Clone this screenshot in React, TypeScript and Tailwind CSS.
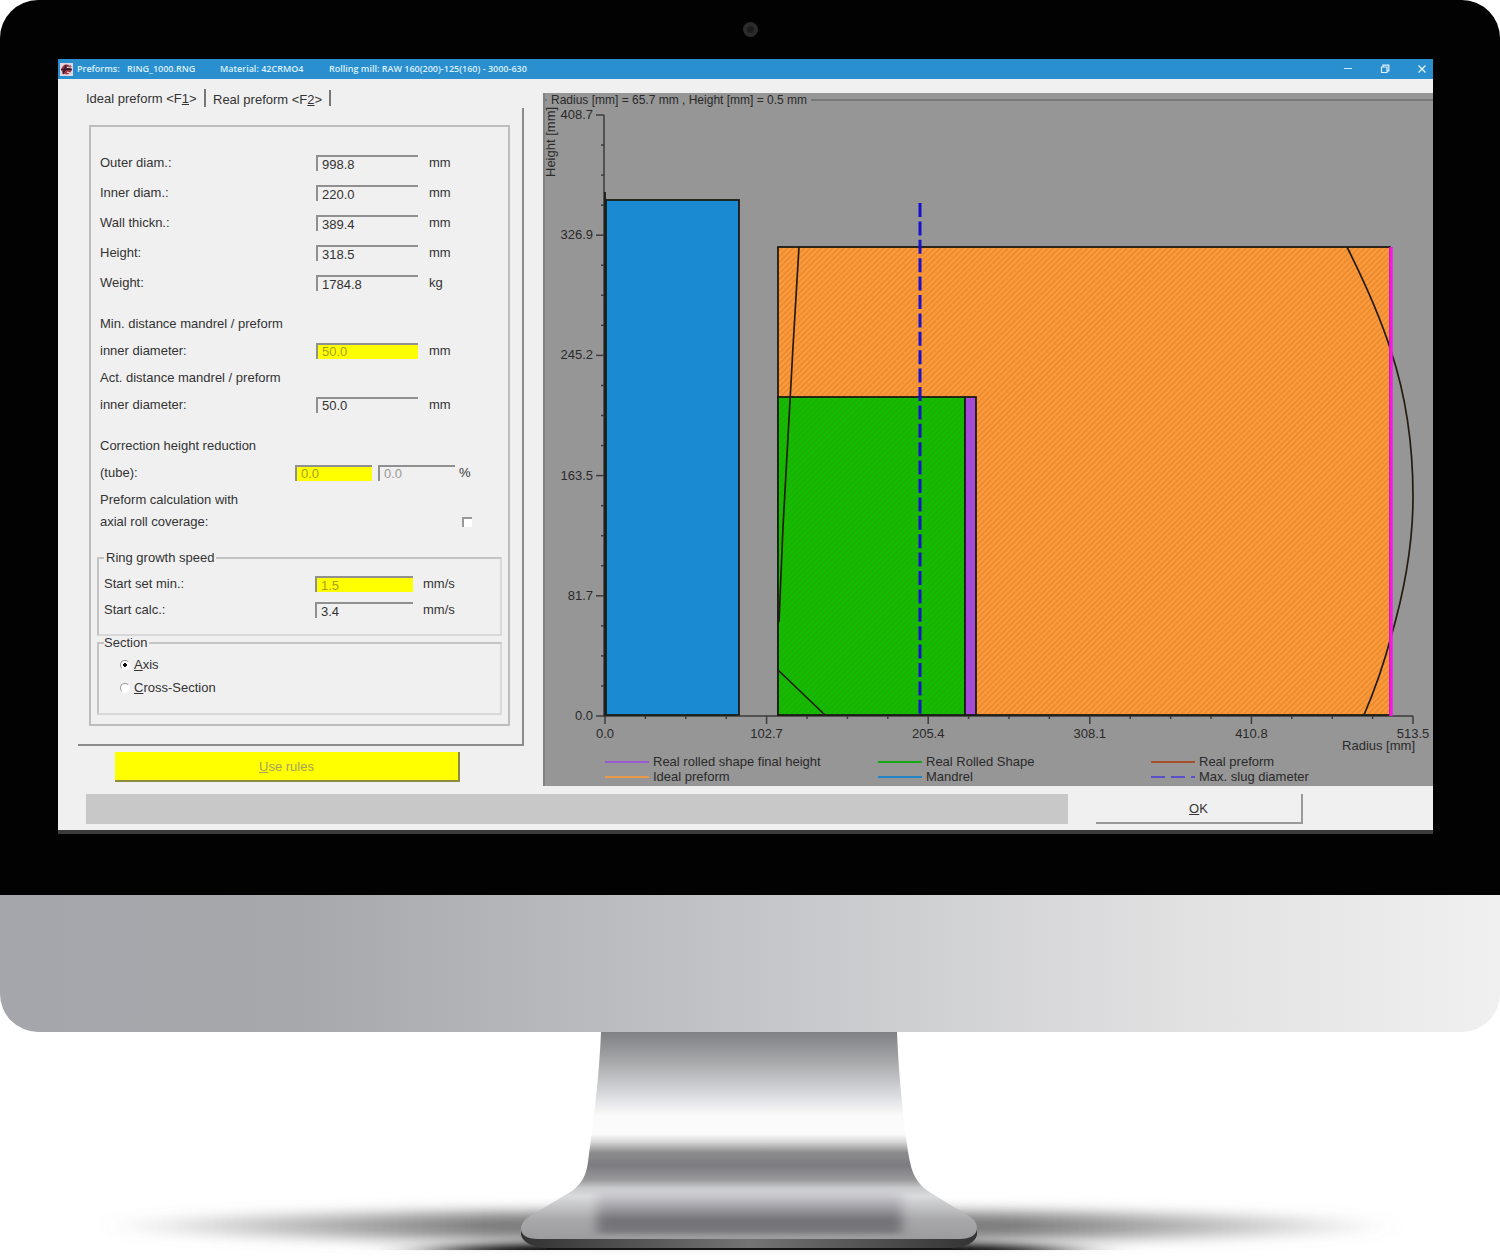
import { useState } from "react"
import type { ReactNode } from "react"
import classNames from "clsx"

const dimensions = [
    { id: 'outer', name: 'Outer diam.:', value: '998.8', unit: 'mm' },
    { id: 'inner', name: 'Inner diam.:', value: '220.0', unit: 'mm' },
    { id: 'wall', name: 'Wall thickn.:', value: '389.4', unit: 'mm' },
    { id: 'height', name: 'Height:', value: '318.5', unit: 'mm' },
    { id: 'weight', name: 'Weight:', value: '1784.8', unit: 'kg' },
]

const legend = [
    { name: 'Real rolled shape final height', color: '#9b59d0' },
    { name: 'Real Rolled Shape', color: '#14a814' },
    { name: 'Real preform', color: '#a8502a' },
    { name: 'Ideal preform', color: '#e8994a' },
    { name: 'Mandrel', color: '#2484c4' },
    { name: 'Max. slug diameter', color: '#5a4fc8', dash: '14 6' },
]

const yLabels = ['408.7', '326.9', '245.2', '163.5', '81.7', '0.0']
const xLabels = ['0.0', '102.7', '205.4', '308.1', '410.8', '513.5']

// plot area inside the chart drawing
const LEFT = 62
const RIGHT = 870
const TOP = 8
const BOTTOM = 609

interface ValueBoxProps {
    id: string
    value: string
    label?: string
    className?: string
}

function ValueBox({ id, value, label, className }: ValueBoxProps) {
    return (
        <input
            id={id}
            aria-label={label}
            defaultValue={value}
            className={classNames("h-4 shrink-0 border-t-2 border-l-2 border-[#909090] pl-1 leading-[14px] outline-none", className)}
        />
    )
}

interface FieldProps {
    id: string
    label: ReactNode
    unit: string
    children: ReactNode
    className?: string
    unitClassName?: string
}

function Field({ id, label, unit, children, className, unitClassName }: FieldProps) {
    return (
        <div className={classNames("flex items-end", className)}>
            <label htmlFor={id} className="flex-1">{label}</label>
            <div className="flex items-center">
                {children}
                <span className={unitClassName ?? "w-[73px] ml-[11px]"}>{unit}</span>
            </div>
        </div>
    )
}

function TitleBar() {
    return (
        <header className="flex h-5 items-center bg-[#2a8fcf] pl-[2px] font-['Open_Sans',sans-serif] text-[9px] font-semibold text-[#dceffc]">
            <svg viewBox="0 0 13 13" className="mr-1 size-[13px]" aria-hidden="true">
                <rect width="13" height="13" fill="#e3d7df" />
                <circle cx="6.5" cy="6.5" r="5" fill="#a3364a" />
                <path d="M1 6.5h11M6 2l-3 9M11 3L4 8" stroke="#3a1c2c" strokeWidth="1.6" />
                <path d="M7 4.5l4-.5M7 9l3 1" stroke="#f0dfe4" strokeWidth="1.2" />
            </svg>
            <span className="w-[50px]">Preforms:</span>
            <span className="w-[93px]">RING_1000.RNG</span>
            <span className="w-[109px]">Material: 42CRMO4</span>
            <span className="flex-1">Rolling mill: RAW 160(200)-125(160) - 3000-630</span>
            <div className="flex gap-[15px]">
                <button aria-label="Minimize" className="flex w-[22px] justify-center">
                    <svg viewBox="0 0 10 10" className="size-[10px]" stroke="#cfe8f8"><path d="M1 4.5h8" /></svg>
                </button>
                <button aria-label="Restore" className="flex w-[22px] justify-center">
                    <svg viewBox="0 0 10 10" className="size-[10px]" fill="none" stroke="#dff0fb" strokeWidth="1.2">
                        <path d="M1.5 3h5.5v5.5h-5.5zM3 3V1.2h5.8v5.6H7" />
                    </svg>
                </button>
                <button aria-label="Close" className="flex w-[22px] justify-center">
                    <svg viewBox="0 0 10 10" className="size-[10px]" stroke="#e4f3fc" strokeWidth="1.3"><path d="M1.5 1.5l7 7M8.5 1.5l-7 7" /></svg>
                </button>
            </div>
        </header>
    )
}

function Tabs() {
    return (
        <div role="tablist" className="flex h-5 items-center pl-2">
            <button role="tab" aria-selected="true" className="h-[18px] w-[120px] border-r-2 border-[#777] text-left">
                Ideal preform &lt;F<u>1</u>&gt;
            </button>
            <button role="tab" aria-selected="false" className="h-4 w-[125px] border-r-2 border-[#777] pl-[7px] text-left">
                Real preform &lt;F<u>2</u>&gt;
            </button>
        </div>
    )
}

function PreformForm() {
    const [section, setSection] = useState('axis')
    const radio = "size-[10px] appearance-none rounded-full border border-[#999] border-r-white border-b-white bg-white bg-[radial-gradient(circle,#111_0_2px,transparent_2px)]"
    const group = "border-2 border-[#c4c4c4] border-r-[#d8d8d8] border-b-[#d8d8d8] pl-[5px]"

    return (
        <div className="border-2 border-[#bdbdbd] px-[6px] pt-[21px] pb-[9px]">
            <div className="pl-[3px]">
                {dimensions.map((item) => (
                    <Field key={item.id} id={item.id} label={item.name} unit={item.unit} className="leading-[30px]">
                        <ValueBox id={item.id} value={item.value} className="w-[102px]" />
                    </Field>
                ))}
                <Field id="min-dist" label={<>Min. distance mandrel / preform<br />inner diameter:</>} unit="mm" className="mt-3 leading-[27px]">
                    <ValueBox id="min-dist" value="50.0" className="w-[102px] bg-[#ffff00] text-[#a8a020]" />
                </Field>
                <Field id="act-dist" label={<>Act. distance mandrel / preform<br />inner diameter:</>} unit="mm" className="leading-[27px]">
                    <ValueBox id="act-dist" value="50.0" className="w-[102px]" />
                </Field>
                <Field
                    id="tube"
                    label={<>Correction height reduction<br />(tube):</>}
                    unit="%"
                    className="mt-[14px] leading-[27px]"
                    unitClassName="ml-1 w-[43px]"
                >
                    <ValueBox id="tube" value="0.0" className="mr-[6px] w-[77px] bg-[#ffff00] text-[#a8a020]" />
                    <ValueBox id="tube-act" label="Actual height reduction" value="0.0" className="w-[77px] text-[#999]" />
                </Field>
                <label className="flex items-end justify-between pr-[30px]">
                    <span>
                        <span className="block leading-[27px]">Preform calculation with</span>
                        <span className="block leading-[18px]">axial roll coverage:</span>
                    </span>
                    <input type="checkbox" className="mb-1 size-[10px] appearance-none border-t-2 border-l-2 border-[#999] bg-white checked:bg-[#333]" />
                </label>
            </div>
            <fieldset className={classNames(group, "mt-5 pb-[11px]")}>
                <legend className="px-[2px] leading-[14px]">Ring growth speed</legend>
                <Field id="set-min" label="Start set min.:" unit="mm/s" className="pt-[6px] leading-[26px]" unitClassName="ml-[10px] w-[77px]">
                    <ValueBox id="set-min" value="1.5" className="w-[98px] bg-[#ffff00] text-[#a8a020]" />
                </Field>
                <Field id="calc" label="Start calc.:" unit="mm/s" className="leading-[26px]" unitClassName="ml-[10px] w-[77px]">
                    <ValueBox id="calc" value="3.4" className="w-[98px]" />
                </Field>
            </fieldset>
            <fieldset className={classNames(group, "pb-[14px]")}>
                <legend className="pr-[2px] leading-[14px]">Section</legend>
                <div className="pt-[3px] pl-4 leading-[23px]">
                    <label className="flex items-center gap-1">
                        <input
                            type="radio"
                            name="section"
                            checked={section === 'axis'}
                            onChange={() => setSection('axis')}
                            className={classNames(radio, section !== 'axis' && "bg-none")}
                        />
                        <span><u>A</u>xis</span>
                    </label>
                    <label className="flex items-center gap-1">
                        <input
                            type="radio"
                            name="section"
                            checked={section === 'cross'}
                            onChange={() => setSection('cross')}
                            className={classNames(radio, section !== 'cross' && "bg-none")}
                        />
                        <span><u>C</u>ross-Section</span>
                    </label>
                </div>
            </fieldset>
        </div>
    )
}

function Plot() {
    const ticks = Array.from({ length: 21 }, (_, i) => i)

    return (
        <svg viewBox="0 0 890 647" className="block w-full overflow-visible text-[13px]" role="img" aria-label="Ring section">
            <defs>
                <pattern id="hatchOrange" width="4" height="4" patternUnits="userSpaceOnUse" patternTransform="rotate(45)">
                    <rect width="4" height="4" fill="#fd9a3b" />
                    <rect width="1.5" height="4" fill="#e7882e" />
                </pattern>
                <pattern id="hatchGreen" width="4" height="4" patternUnits="userSpaceOnUse" patternTransform="rotate(45)">
                    <rect width="4" height="4" fill="#12bc02" />
                    <rect width="1.2" height="4" fill="#22ab02" />
                </pattern>
            </defs>

            <g stroke="#3c3c3c" strokeWidth="1.5">
                <path d={`M${LEFT - 1} ${TOP}V${BOTTOM}H${RIGHT}`} fill="none" />
                {ticks.map((i) => {
                    const y = BOTTOM - (i * (BOTTOM - TOP)) / 20
                    return <line key={i} x1={LEFT - (i % 4 ? 4 : 9)} x2={LEFT - 1} y1={y} y2={y} />
                })}
                {ticks.map((i) => {
                    const x = LEFT + (i * (RIGHT - LEFT)) / 20
                    return <line key={i} x1={x} x2={x} y1={BOTTOM} y2={BOTTOM + (i % 4 ? 3 : 8)} />
                })}
            </g>

            <g fill="#2a2a2a">
                {yLabels.map((label, i) => (
                    <text key={label} x="50" y={TOP + 4 + (i * (BOTTOM - TOP)) / 5} textAnchor="end">{label}</text>
                ))}
                {xLabels.map((label, i) => (
                    <text key={label} x={LEFT + (i * (RIGHT - LEFT)) / 5} y="631" textAnchor="middle">{label}</text>
                ))}
                <text x="872" y="643" textAnchor="end">Radius [mm]</text>
                <text transform="translate(12 70) rotate(-90)">Height [mm]</text>
            </g>

            <g stroke="#1c1c14" strokeWidth="1.8">
                <path d={`M62 85V${BOTTOM}`} />
                <rect x="63" y="93" width="133" height="515" fill="#1a8ad2" />
                <rect x="235" y="140" width="612" height="468" fill="url(#hatchOrange)" />
                <rect x="235" y="290" width="187" height="318" fill="url(#hatchGreen)" />
                <rect x="422" y="290" width="11" height="318" fill="#a44bd8" />
            </g>
            <g stroke="#241c10" strokeWidth="1.7" fill="none">
                <path d="M256 140L250 240L240 420L236 515" />
                <path d="M235 563L282 608" />
                <path d="M804 140C820 172 836 206 848 244C862 286 870 336 870 390C870 436 862 482 848 530C840 560 830 587 821 608" />
            </g>
            <path d="M848 140V609" stroke="#f818e4" strokeWidth="3.5" />
            <path d="M377 96V608" stroke="#1a10cc" strokeWidth="3" strokeDasharray="14 4.4" />
        </svg>
    )
}

function ChartPanel() {
    return (
        <section className="min-w-0 flex-1 border-l-2 border-[#808080] bg-[#969696] pb-[2px] text-[13px] text-[#2a2a2a]">
            <div className="flex items-center gap-1 leading-[14px]">
                <span className="w-[2px] border-t-2 border-[#777]" />
                <h2 className="text-[12px]">Radius [mm] = 65.7 mm , Height [mm] = 0.5 mm</h2>
                <span className="flex-1 border-t-2 border-[#777]" />
            </div>
            <div className="-ml-[2px]">
                <Plot />
            </div>
            <ul className="grid grid-cols-3 pr-[9px] pl-[60px] leading-[15px]">
                {legend.map((item) => (
                    <li key={item.name} className="flex items-center gap-1">
                        <svg viewBox="0 0 44 2" className="h-[2px] w-11" aria-hidden="true">
                            <path d="M0 1H44" stroke={item.color} strokeWidth="2" strokeDasharray={item.dash} />
                        </svg>
                        {item.name}
                    </li>
                ))}
            </ul>
        </section>
    )
}

function PreformWindow() {
    return (
        <div className="border-b-4 border-[#3c3c3c] bg-[#f0f0f0] font-['Liberation_Sans',Arial,sans-serif] text-[13px] text-[#333]">
            <TitleBar />
            <div className="flex">
                <div className="w-[485px] shrink-0 pt-[9px] pr-5 pl-5">
                    <Tabs />
                    <div className="mr-[-1px] border-r-2 border-b-2 border-[#8c8c8c] pt-[17px] pr-3 pb-[18px] pl-[11px]">
                        <PreformForm />
                    </div>
                    <button className="mt-[6px] ml-[37px] h-[30px] w-[345px] border-r-2 border-b-2 border-[#8c8c40] bg-[#ffff00] pt-[2px] text-[#a8a060]">
                        <u>U</u>se rules
                    </button>
                </div>
                <div className="flex min-w-0 flex-1 pt-[14px]">
                    <ChartPanel />
                </div>
            </div>
            <footer className="flex items-center gap-7 pt-2 pr-[130px] pb-[6px] pl-7">
                <div className="h-[30px] flex-1 bg-[#c8c8c8]" />
                <button className="h-[30px] w-[207px] border-r-2 border-b-2 border-[#999] pt-[2px]"><u>O</u>K</button>
            </footer>
        </div>
    )
}

function Stand() {
    return (
        <svg viewBox="0 0 1500 224" className="block w-full" aria-hidden="true">
            <defs>
                <linearGradient id="neck" gradientUnits="userSpaceOnUse" x1="0" y1="0" x2="0" y2="208">
                    <stop offset="0" stopColor="#7f8083" />
                    <stop offset="0.13" stopColor="#a3a4a6" />
                    <stop offset="0.31" stopColor="#dcdde0" />
                    <stop offset="0.4" stopColor="#fafafa" />
                    <stop offset="0.49" stopColor="#fbfbfb" />
                    <stop offset="0.53" stopColor="#d5d5d5" />
                    <stop offset="0.58" stopColor="#8c8c8e" />
                    <stop offset="0.64" stopColor="#7c7c80" />
                    <stop offset="0.71" stopColor="#98989a" />
                    <stop offset="0.75" stopColor="#c9cacc" />
                    <stop offset="0.79" stopColor="#dadbdd" />
                    <stop offset="0.9" stopColor="#a9a9ab" />
                    <stop offset="1" stopColor="#9b9b9d" />
                </linearGradient>
                <linearGradient id="foot" x1="0" y1="0" x2="0" y2="1">
                    <stop offset="0" stopColor="#c6c5ca" stopOpacity="0" />
                    <stop offset="0.3" stopColor="#b5b4ba" />
                    <stop offset="0.7" stopColor="#717176" />
                    <stop offset="1" stopColor="#7c7c7e" />
                </linearGradient>
                <linearGradient id="edge" x1="0" x2="1">
                    <stop offset="0" stopColor="#333" />
                    <stop offset="0.5" stopColor="#747474" />
                    <stop offset="1" stopColor="#333" />
                </linearGradient>
                <linearGradient id="fade" x1="0" x2="1">
                    <stop offset="0" stopColor="#7c7c7c" stopOpacity="0" />
                    <stop offset="0.14" stopColor="#7c7c7c" stopOpacity="0.5" />
                    <stop offset="0.3" stopColor="#7c7c7c" />
                    <stop offset="0.7" stopColor="#7c7c7c" />
                    <stop offset="0.86" stopColor="#7c7c7c" stopOpacity="0.5" />
                    <stop offset="1" stopColor="#7c7c7c" stopOpacity="0" />
                </linearGradient>
                <filter id="wide" x="-20%" y="-300%" width="140%" height="700%"><feGaussianBlur stdDeviation="10 7" /></filter>
                <filter id="close" x="-20%" y="-300%" width="140%" height="700%"><feGaussianBlur stdDeviation="34 4" /></filter>
                <filter id="soft" x="-10%" y="-30%" width="120%" height="160%"><feGaussianBlur stdDeviation="6 2" /></filter>
                <clipPath id="floor"><rect y="150" width="1500" height="68" /></clipPath>
            </defs>
            <ellipse cx="750" cy="194" rx="650" ry="15" fill="url(#fade)" filter="url(#wide)" />
            <g clipPath="url(#floor)">
                <ellipse cx="750" cy="219" rx="320" ry="10" fill="#000" filter="url(#close)" />
                <path d="M521 197V203C523 211 533 215 546 216H952C966 215 975 211 977 203V197Z" fill="url(#edge)" />
                <path d="M546 216H952V218H546Z" fill="#151515" />
            </g>
            <path
                d="M601 0H897C899 50 905 105 910 130C913 146 921 155 931 161L967 183C974 187 977 191 977 196C977 203 970 207 960 207H538C527 207 521 203 521 197C521 192 524 188 530 184L572 159C582 151 586 144 588 130C592 100 599 50 601 0Z"
                fill="url(#neck)"
            />
            <rect x="597" y="156" width="305" height="46" fill="url(#foot)" filter="url(#soft)" />
        </svg>
    )
}

export default function App() {
    return (
        <main className="min-h-screen overflow-hidden bg-white">
            <div className="rounded-t-[38px] bg-[#020202] pr-[67px] pb-[61px] pl-[58px]">
                <div className="flex h-[59px] items-center justify-center pl-[9px]">
                    <span className="size-[15px] rounded-full border-4 border-[#2b2b2b] bg-[#1c1c1c]" />
                </div>
                <PreformWindow />
            </div>
            <div className="h-[137px] rounded-b-[38px] bg-[linear-gradient(90deg,#a5a6ab_0%,#a7a8ac_20%,#c2c3c6_48%,#e2e2e3_80%,#f0f0f0_100%)]" />
            <Stand />
        </main>
    )
}
